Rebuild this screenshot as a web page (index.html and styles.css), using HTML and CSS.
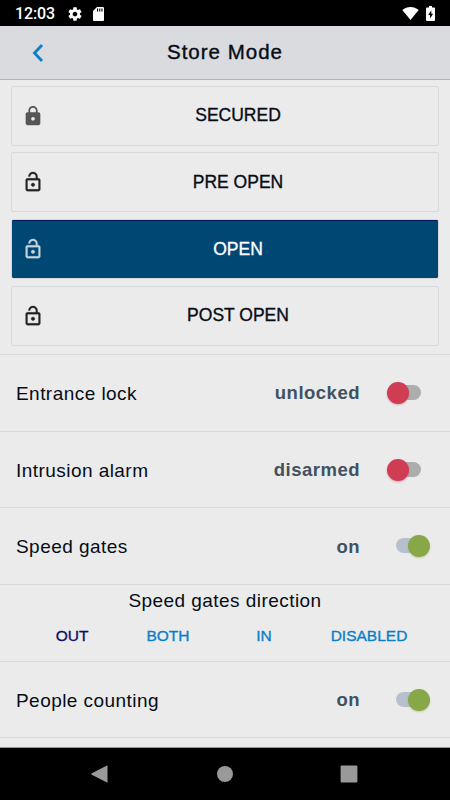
FILE: index.html
```html
<!DOCTYPE html>
<html lang="en">
  <head>
    <meta charset="UTF-8" />
    <meta name="viewport" content="width=device-width, initial-scale=1.0" />
    <title>Store Mode</title>
    <link rel="stylesheet" href="styles.css">
  </head>
  <body>
    <svg class="defs" width="0" height="0">
      <symbol id="lock-open" viewBox="0 0 24 24">
        <path d="M12 17c1.100 0 2-.9 2-2s-.9-2-2-2-2 .9-2 2 .9 2 2 2zm6-9h-1V6c0-2.760-2.240-5-5-5S7 3.240 7 6h1.900c0-1.710 1.390-3.100 3.100-3.100s3.100 1.390 3.100 3.100v2H6c-1.100 0-2 .9-2 2v10c0 1.100.9 2 2 2h12c1.100 0 2-.9 2-2V10c0-1.100-.9-2-2-2zm0 12H6V10h12v10z" />
      </symbol>
    </svg>
    <div class="status-bar">
      <span class="time">12:03</span>
      <svg class="gear" viewBox="0 0 24 24">
        <path d="M19.430 12.980c.04-.32.07-.64.07-.98s-.03-.66-.07-.98l2.110-1.650c.19-.15.24-.42.12-.64l-2-3.460c-.12-.22-.39-.3-.61-.22l-2.490 1c-.52-.4-1.080-.73-1.690-.98l-.38-2.650C14.460 2.180 14.250 2 14 2h-4c-.25 0-.46.18-.49.42l-.38 2.650c-.61.25-1.170.59-1.690.98l-2.490-1c-.23-.09-.49 0-.61.22l-2 3.460c-.13.22-.07.49.12.64l2.110 1.650c-.04.32-.07.65-.07.98s.03.66.07.98l-2.110 1.650c-.19.15-.24.42-.12.64l2 3.460c.12.22.39.3.61.22l2.490-1c.52.4 1.080.73 1.690.98l.38 2.650c.03.24.24.42.49.42h4c.25 0 .46-.18.49-.42l.38-2.650c.61-.25 1.170-.59 1.690-.98l2.490 1c.23.09.49 0 .61-.22l2-3.460c.12-.22.07-.49-.12-.64l-2.110-1.650zM12 15.500c-1.930 0-3.500-1.570-3.500-3.500s1.570-3.500 3.500-3.500 3.500 1.570 3.500 3.500-1.570 3.500-3.500 3.500z" />
      </svg>
      <svg class="sd-card" viewBox="0 0 11 14">
        <path d="M4 0h6a1 1 0 0 1 1 1v12a1 1 0 0 1-1 1H1a1 1 0 0 1-1-1V4z" />
        <path class="cut" d="M4 1.500h1.100v3H4zM6.200 1.500h1.100v3H6.200zM8.400 1.500h1.100v3H8.400z" />
      </svg>
      <svg class="wifi" viewBox="0 0 18 14">
        <path d="M9 14L.2 3.300C2.800 1.200 5.700.1 9 .1s6.200 1.100 8.800 3.200z" />
      </svg>
      <svg class="battery" viewBox="0 0 9 15">
        <path d="M3 0h3v1.500h2a1 1 0 0 1 1 1V14a1 1 0 0 1-1 1H1a1 1 0 0 1-1-1V2.500a1 1 0 0 1 1-1h2z" />
        <path class="cut" d="M5.300 4.200L2.200 8.900h1.900v3.700l3-4.800H5.300z" />
      </svg>
    </div>

    <header class="header">
      <svg class="back" viewBox="0 0 12 18"><path d="M10 1L2.500 9l7.500 8" /></svg>
      <h1>Store Mode</h1>
    </header>

    <main class="content">
      <div class="modes">
        <button class="mode">
          <svg class="closed" viewBox="0 0 24 24">
            <path d="M18 8h-1V6c0-2.760-2.240-5-5-5S7 3.240 7 6v2H6c-1.100 0-2 .9-2 2v10c0 1.100.9 2 2 2h12c1.100 0 2-.9 2-2V10c0-1.100-.9-2-2-2zm-6 9c-1.100 0-2-.9-2-2s.9-2 2-2 2 .9 2 2-.9 2-2 2zm3.100-9H8.900V6c0-1.710 1.390-3.100 3.100-3.100s3.100 1.390 3.100 3.100v2z" />
          </svg>
          <span>SECURED</span>
        </button>
        <button class="mode">
          <svg><use href="#lock-open" /></svg>
          <span>PRE OPEN</span>
        </button>
        <button class="mode active">
          <svg><use href="#lock-open" /></svg>
          <span>OPEN</span>
        </button>
        <button class="mode">
          <svg><use href="#lock-open" /></svg>
          <span>POST OPEN</span>
        </button>
      </div>

      <div class="item">
        <span class="label">Entrance lock</span>
        <span class="state">unlocked</span>
        <span class="toggle"></span>
      </div>
      <div class="item">
        <span class="label">Intrusion alarm</span>
        <span class="state">disarmed</span>
        <span class="toggle"></span>
      </div>
      <div class="item">
        <span class="label">Speed gates</span>
        <span class="state">on</span>
        <span class="toggle on"></span>
      </div>
      <div class="item direction">
        <span class="label">Speed gates direction</span>
        <div class="options">
          <a class="selected">OUT</a>
          <a>BOTH</a>
          <a>IN</a>
          <a class="wide">DISABLED</a>
        </div>
      </div>
      <div class="item">
        <span class="label">People counting</span>
        <span class="state">on</span>
        <span class="toggle on"></span>
      </div>
      <div class="item"></div>
    </main>

    <nav class="nav-bar">
      <svg viewBox="0 0 18 18"><path d="M16.500.3v17.400L.8 9.700a.8.8 0 0 1 0-1.400z" /></svg>
      <svg viewBox="0 0 18 18"><circle cx="9" cy="9" r="8" /></svg>
      <svg viewBox="0 0 18 18"><rect x=".6" y=".6" width="16.800" height="16.800" rx="1" /></svg>
    </nav>
  </body>
</html>
```

FILE: styles.css
```css
:root {
  --bg: #ebebeb;
  --text: #060d16;
  --border: #d8d9de;
  --blue: #0a7fc8;
}
* {
  box-sizing: border-box;
  margin: 0;
  padding: 0;
}
body {
  font-family: "Liberation Sans", Arial, sans-serif;
  background: var(--bg);
  color: var(--text);
  display: flex;
  flex-direction: column;
  height: 100vh;
  overflow: hidden;
}
.defs {
  position: absolute;
}
.status-bar {
  display: flex;
  align-items: center;
  flex: 0 0 26px;
  padding: 1px 15px 0 15px;
  background: #000;
  color: #fff;
  fill: #fff;
}
.time {
  width: 53px;
  font: 500 16px/20px Roboto, sans-serif;
  letter-spacing: -0.100px;
}
.status-bar .cut {
  fill: #000;
}
.gear {
  width: 16px;
  height: 16px;
  margin-right: 10px;
  margin-left: -1px;
}
.sd-card {
  width: 11px;
  height: 14px;
}
.wifi {
  width: 17px;
  height: 13px;
  margin-left: auto;
  margin-right: 7px;
}
.battery {
  width: 9px;
  height: 15px;
}
.header {
  display: flex;
  align-items: center;
  flex: 0 0 54px;
  padding: 0 32px;
  background: #dadbdf;
  border-bottom: 1px solid #a9b8bf;
}
.back {
  width: 12px;
  height: 18px;
  fill: none;
  stroke: var(--blue);
  stroke-width: 2.800;
}
.header h1 {
  flex: 1;
  margin-right: 12px;
  padding-bottom: 1px;
  text-align: center;
  font-size: 20.500px;
  font-weight: normal;
  letter-spacing: 1px;
  -webkit-text-stroke: 0.400px;
}
.content {
  flex: 1;
  overflow: hidden;
}
.modes {
  display: flex;
  flex-direction: column;
  gap: 6.700px;
  padding: 5.700px 11px 8.300px;
}
.mode {
  display: flex;
  align-items: center;
  height: 60px;
  padding: 0 10px;
  background: none;
  border: 1px solid var(--border);
  border-radius: 2px;
  color: var(--text);
  font: 17.500px "Liberation Sans", Arial, sans-serif;
  -webkit-text-stroke: 0.350px;
}
.mode svg {
  width: 22px;
  height: 22px;
  fill: #222;
  stroke: #222;
  stroke-width: 0.300;
}
.mode .closed {
  fill: #555;
  stroke: none;
}
.mode span {
  flex: 1;
  margin-left: 4px;
  text-align: center;
}
.mode.active {
  background: #004774;
  background-clip: padding-box;
  box-shadow: inset 0 1px #00185a;
  color: #fff;
}
.mode.active svg {
  fill: #c5d5de;
  stroke: #c5d5de;
}
.item {
  display: flex;
  align-items: center;
  height: 76.700px;
  padding: 0 20px 0 16px;
  border-top: 1px solid var(--border);
}
.label {
  flex: 1;
  padding-top: 2px;
  font-size: 19px;
  letter-spacing: 0.450px;
}
.state {
  padding-top: 1px;
  color: #405261;
  font-size: 18.500px;
  font-weight: bold;
  letter-spacing: 0.500px;
}
.toggle {
  position: relative;
  width: 34px;
  height: 22px;
  margin-left: 27px;
  margin-right: 9px;
}
.toggle::before {
  content: "";
  position: absolute;
  inset: 3px 0 4px 4px;
  border-radius: 8px;
  background: #adadad;
}
.toggle::after {
  content: "";
  position: absolute;
  left: 0;
  top: 0;
  width: 22px;
  height: 22px;
  border-radius: 50%;
  background: #ce3d54;
  box-shadow: 0 1px 2px rgba(206, 61, 84, 0.400);
}
.toggle.on {
  margin-left: 36px;
  margin-right: 0;
}
.toggle.on::before {
  inset: 3px 4px 4px 0;
  background: #b7c0cc;
}
.toggle.on::after {
  left: 12px;
  background: #87a748;
  box-shadow: 0 1px 2px rgba(135, 167, 72, 0.400);
}
.direction {
  flex-direction: column;
  padding: 5px 24px 0;
}
.direction .label {
  flex: none;
  padding: 0;
}
.options {
  display: flex;
  width: 100%;
  margin-top: 15px;
}
.options a {
  width: 96px;
  text-align: center;
  color: var(--blue);
  font-size: 15.500px;
  line-height: 18px;
  -webkit-text-stroke: 0.350px;
}
.options .wide {
  width: 114px;
}
.options .selected {
  color: #0a0f66;
}
.nav-bar {
  display: flex;
  justify-content: space-between;
  align-items: center;
  flex: 0 0 53px;
  padding: 0 92px 0 91px;
  background: #000;
  border-top: 1px solid #999;
  fill: #999;
}
.nav-bar svg {
  width: 18px;
  height: 18px;
}
```
